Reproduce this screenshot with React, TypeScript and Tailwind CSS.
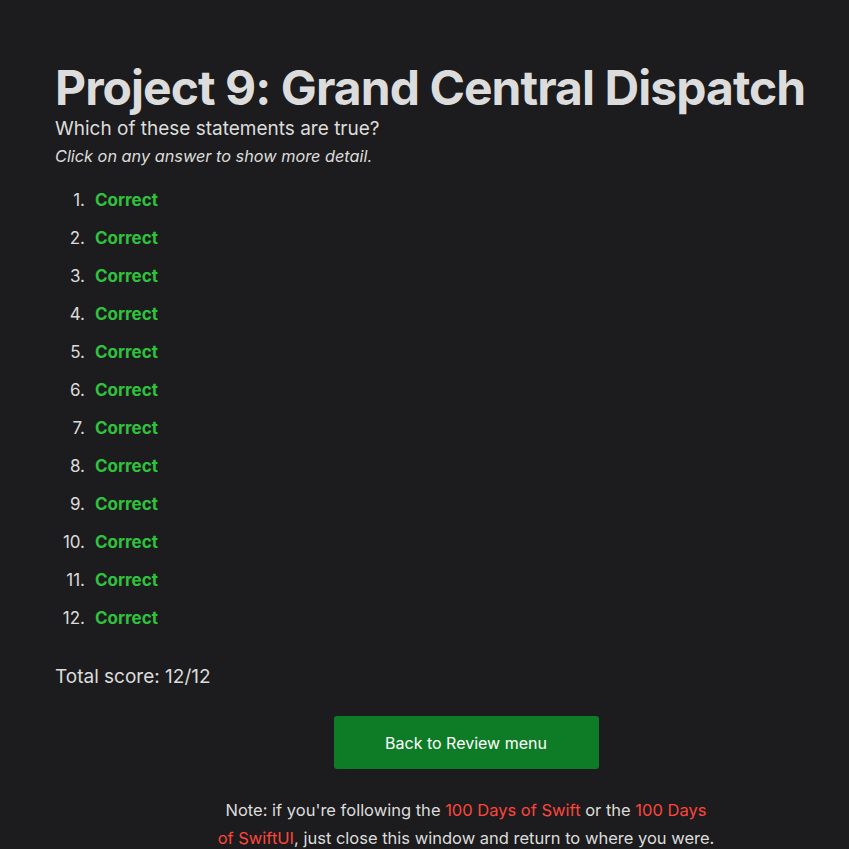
import React from "react";

export default function App() {
  const items = Array.from({ length: 12 }, (_, i) => i + 1);
  return (
    <div
      className="min-h-[849px] w-full overflow-hidden bg-[#1c1c1e] text-[#dcdcdc]"
      style={{ fontFamily: "Inter, 'Noto Sans', sans-serif" }}
    >
      <div className="ml-[55px] w-[822px] pt-[60px]">
        <h1 className="text-[48px] font-bold leading-[56px] tracking-[-0.95px] text-[#dcdcdc] whitespace-nowrap">
          Project 9: Grand Central Dispatch
        </h1>
        <p className="text-[19px] leading-[26px]">Which of these statements are true?</p>
        <p className="mt-[3px] text-[16.3px] italic leading-[22px]">Click on any answer to show more detail.</p>
        <ol className="mt-[21px] text-[17px]">
          {items.map((n) => (
            <li key={n} className="flex h-[38px] leading-[24px]">
              <span className="w-[30px] text-right">{n}.</span>
              <span className="ml-[10px] font-bold text-[#2fc33d]">Correct</span>
            </li>
          ))}
        </ol>
        <p className="mt-[21px] text-[19px] leading-[24px]">Total score: 12/12</p>
        <div className="mt-[27px] flex flex-col items-center">
          <button className="h-[53px] w-[265px] rounded-[3px] bg-[#0e7c26] text-[16px] text-white">
            Back to Review menu
          </button>
          <p className="mt-[27px] w-[500px] text-center text-[16.5px] leading-[28px]">
            Note: if you're following the <span className="text-[#ff453a]">100 Days of Swift</span> or the{" "}
            <span className="text-[#ff453a]">100 Days of SwiftUI</span>, just close this window and return to where you were.
          </p>
        </div>
      </div>
    </div>
  );
}
